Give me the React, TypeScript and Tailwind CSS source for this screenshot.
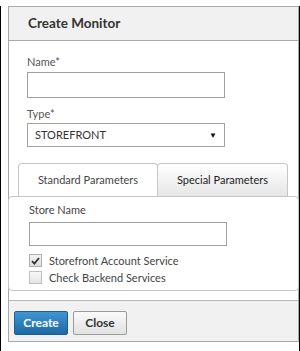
import React, { useState } from 'react';

const font = "font-['Lato','Open_Sans',sans-serif]";

const App: React.FC = () => {
  const [name, setName] = useState<string>('');
  const [type, setType] = useState<string>('STOREFRONT');
  const [storeName, setStoreName] = useState<string>('');
  const [accountService, setAccountService] = useState<boolean>(true);
  const [checkBackend, setCheckBackend] = useState<boolean>(false);

  return (
    <div className={`w-[300px] h-[351px] bg-white border-l border-r border-b-2 border-black ${font}`}>
      <div className="ml-[7px] mt-[6px] w-[291px] h-[336px] border border-[#a9a9a9] flex flex-col">
        {/* Header */}
        <div className="h-[34px] shrink-0 bg-[#f1f1f1] border-b border-[#a9a9a9] pl-[19px] flex items-center">
          <h1 className="text-[13.5px] font-bold text-[#333]">Create Monitor</h1>
        </div>

        {/* Body */}
        <div className="h-[250px] shrink-0 flex flex-col">
          <div className="pl-[18px] pt-[13px]">
            <label className="block text-[11px] leading-[16px] text-[#555]">Name*</label>
            <input
              type="text"
              value={name}
              onChange={(e) => setName(e.target.value)}
              className="mt-[2px] block w-[198px] h-[26px] border border-[#a0a0a0] bg-white outline-none px-2 text-[11px]"
            />

            <label className="block mt-[8px] text-[11px] leading-[16px] text-[#555]">Type*</label>
            <div className="relative mt-[1px] w-[198px] h-[24px] border border-[#a0a0a0] bg-white flex items-center">
              <span className="pl-[7px] text-[11px] text-[#333]">{type}</span>
              <span className="absolute right-[7px] top-[7px] text-[8px] leading-none text-[#111]">▼</span>
              <select
                value={type}
                onChange={(e) => setType(e.target.value)}
                className="absolute inset-0 opacity-0"
              >
                <option value="STOREFRONT">STOREFRONT</option>
              </select>
            </div>
          </div>

          {/* Tabs */}
          <div className="mt-[16px] pl-[9px] flex h-[33px]">
            <div className="w-[140px] border border-b-0 border-[#c6c6c6] rounded-t-[4px] bg-white flex items-center justify-center text-[11px] text-[#444]">
              Standard Parameters
            </div>
            <div className="w-[131px] -ml-px border border-b-0 border-[#c6c6c6] rounded-t-[4px] bg-gradient-to-b from-white to-[#e6e6e6] flex items-center justify-center text-[11px] text-[#222]">
              Special Parameters
            </div>
          </div>
          <div className="-mx-px h-[95px] border border-[#c6c6c6] rounded-[4px] pl-[20px] pt-[5px]">
            <label className="block text-[11px] leading-[16px] text-[#444]">Store Name</label>
            <input
              type="text"
              value={storeName}
              onChange={(e) => setStoreName(e.target.value)}
              className="mt-[4px] block w-[198px] h-[24px] border border-[#a0a0a0] bg-white outline-none px-2 text-[11px]"
            />
            <label className="mt-[6px] flex items-center gap-[7px] text-[11px] leading-[17px] text-[#444] cursor-pointer">
              <span
                onClick={() => setAccountService(!accountService)}
                className="w-[13px] h-[13px] border border-[#b0b0b0] bg-gradient-to-b from-[#f4f4f4] to-[#dcdcdc] flex items-center justify-center"
              >
                {accountService && (
                  <svg width="9" height="8" viewBox="0 0 9 8">
                    <path d="M1 4.2 L3.4 6.6 L8 1" fill="none" stroke="#333" strokeWidth="1.8" />
                  </svg>
                )}
              </span>
              Storefront Account Service
            </label>
            <label className="flex items-center gap-[7px] text-[11px] leading-[17px] text-[#444] cursor-pointer">
              <span
                onClick={() => setCheckBackend(!checkBackend)}
                className="w-[13px] h-[13px] border border-[#c0c0c0] bg-gradient-to-b from-[#f8f8f8] to-[#e4e4e4] flex items-center justify-center"
              >
                {checkBackend && (
                  <svg width="9" height="8" viewBox="0 0 9 8">
                    <path d="M1 4.2 L3.4 6.6 L8 1" fill="none" stroke="#333" strokeWidth="1.8" />
                  </svg>
                )}
              </span>
              Check Backend Services
            </label>
          </div>
        </div>

        {/* Footer */}
        <div className="h-[41px] shrink-0 mt-[9px] bg-[#f1f1f1] border-t border-[#b9b9b9] pl-[5px] pt-[10px] flex items-start gap-[5px]">
          <button className="w-[54px] h-[24px] rounded-[2px] border border-[#1b5f94] bg-gradient-to-b from-[#3f95d3] to-[#1e69a6] text-white text-[12px] font-bold">
            Create
          </button>
          <button className="w-[54px] h-[24px] rounded-[2px] border border-[#9a9a9a] bg-gradient-to-b from-[#fafafa] to-[#e2e2e2] text-[#333] text-[12px] font-bold">
            Close
          </button>
        </div>
      </div>
    </div>
  );
};

export default App;
